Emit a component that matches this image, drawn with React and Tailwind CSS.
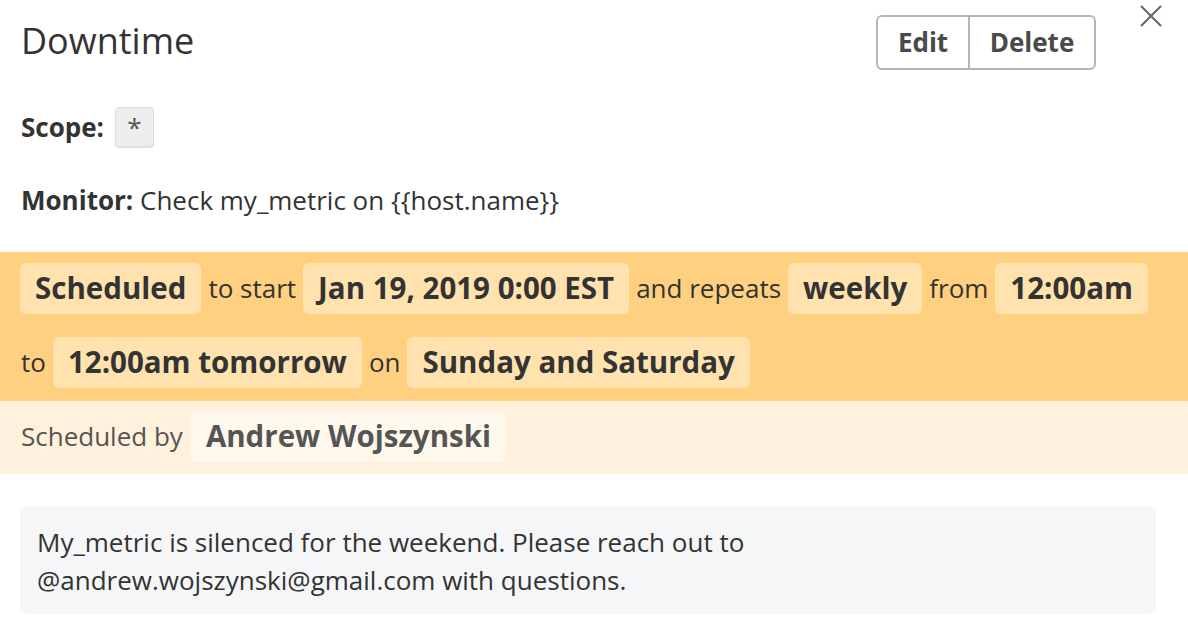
import React from 'react';

const Pill = ({ children, tone = 'orange' }) => (
  <span
    className={`inline-flex items-center h-[51px] px-[15px] rounded-[6px] text-[29.5px] font-bold ${
      tone === 'orange' ? 'bg-[#ffe2ad] text-[#333333]' : 'bg-[#fff8ec] text-[#555555]'
    }`}
  >
    {children}
  </span>
);

const Word = ({ children, className = '' }) => (
  <span className={`text-[26px] text-[#333333] ${className}`}>{children}</span>
);

export default function App() {
  return (
    <div className="w-[1188px] h-[634px] bg-white font-['Open_Sans','Noto_Sans',sans-serif] text-[#333333] overflow-hidden">
      <div className="flex items-start justify-between pl-[21px] pr-[26px]">
        <h1 className="mt-[17px] text-[36px] leading-[48px] font-normal text-[#333333]">Downtime</h1>
        <div className="flex items-start">
          <div className="mt-[15px] flex h-[55px] rounded-[6px] border-2 border-[#b5b5b5] overflow-hidden">
            <button className="w-[92px] text-[26px] font-bold text-[#4a4a4a] border-r-2 border-[#b5b5b5]">Edit</button>
            <button className="w-[124px] text-[26px] font-bold text-[#4a4a4a]">Delete</button>
          </div>
          <svg className="ml-[44px] mt-[5px]" width="22" height="22" viewBox="0 0 22 22">
            <path d="M1 1 L21 21 M21 1 L1 21" stroke="#666666" strokeWidth="2" />
          </svg>
        </div>
      </div>

      <div className="pl-[21px] mt-[37px] flex items-center gap-[11px]">
        <span className="text-[26px] font-bold">Scope:</span>
        <span className="w-[39px] h-[40px] flex items-center justify-center rounded-[4px] bg-[#eeeeee] border border-[#dddddd] shadow-[0_1px_1px_rgba(0,0,0,0.12)] text-[26px] text-[#555555]">
          *
        </span>
      </div>

      <div className="pl-[21px] mt-[36px] text-[26px] leading-[34px]">
        <span className="font-bold">Monitor:</span> Check my_metric on {'{{host.name}}'}
      </div>

      <div className="mt-[35px] bg-[#ffd080] pl-[20px] pt-[11px] pb-[13px] flex flex-col gap-[23px]">
        <div className="flex items-center gap-[7px]">
          <Pill>Scheduled</Pill>
          <Word>to start</Word>
          <Pill>Jan 19, 2019 0:00 EST</Pill>
          <Word>and repeats</Word>
          <Pill>weekly</Pill>
          <Word>from</Word>
          <Pill>12:00am</Pill>
        </div>
        <div className="flex items-center gap-[7px]">
          <Word className="ml-[1px]">to</Word>
          <Pill>12:00am tomorrow</Pill>
          <Word>on</Word>
          <Pill>Sunday and Saturday</Pill>
        </div>
      </div>

      <div className="bg-[#fff1dc] pl-[21px] pt-[10px] pb-[12px] flex items-center gap-[8px]">
        <span className="text-[26px] text-[#555555]">Scheduled by</span>
        <Pill tone="light">Andrew Wojszynski</Pill>
      </div>

      <div className="mt-[33px] ml-[20px] mr-[32px] rounded-[6px] bg-[#f5f6f8] pl-[17px] pr-[16px] pt-[16px] pb-[15px] text-[26px] leading-[38px] text-[#333333]">
        My_metric is silenced for the weekend. Please reach out to
        <br />
        @andrew.wojszynski@gmail.com with questions.
      </div>
    </div>
  );
}
